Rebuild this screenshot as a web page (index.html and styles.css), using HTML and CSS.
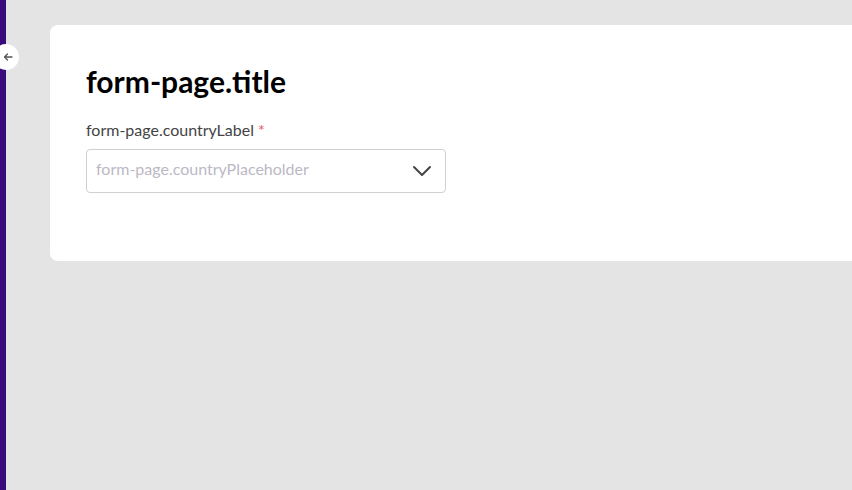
FILE: index.html
```html
<!DOCTYPE html>
<html lang="en">
<head>
    <meta charset="UTF-8">
    <meta name="viewport" content="width=device-width, initial-scale=1.0">
    <title>form-page</title>
    <link rel="stylesheet" href="styles.css">
</head>
<body>
    <div class="layout">
        <aside class="sidebar">
            <button class="collapse-btn" aria-label="Collapse">
                <svg width="10" height="10" viewBox="0 0 10 10">
                    <path d="M9 5H1.5M4.5 2L1.5 5L4.5 8" fill="none" stroke="#555" stroke-width="1.3" stroke-linecap="round" stroke-linejoin="round"/>
                </svg>
            </button>
        </aside>
        <main class="content">
            <section class="card">
                <h1 class="card-title">form-page.title</h1>
                <div class="field">
                    <label class="field-label">form-page.countryLabel <span class="required">*</span></label>
                    <div class="select">
                        <span class="select-placeholder">form-page.countryPlaceholder</span>
                        <svg class="select-arrow" width="20" height="12" viewBox="0 0 20 12">
                            <path d="M2 2L10 10L18 2" fill="none" stroke="#444" stroke-width="2" stroke-linecap="round" stroke-linejoin="round"/>
                        </svg>
                    </div>
                </div>
            </section>
        </main>
    </div>
</body>
</html>
```

FILE: styles.css
```css
* {
    margin: 0;
    padding: 0;
    box-sizing: border-box;
}
body {
    font-family: Lato, "Liberation Sans", sans-serif;
    background-color: #e4e4e4;
    height: 100vh;
    overflow: hidden;
}
.layout {
    display: flex;
    height: 100%;
}
.sidebar {
    position: relative;
    width: 6px;
    flex-shrink: 0;
    background-color: #3b0a7a;
}
.collapse-btn {
    position: absolute;
    left: -7px;
    top: 44px;
    width: 26px;
    height: 26px;
    border-radius: 50%;
    border: none;
    background: #fff;
    display: flex;
    align-items: center;
    justify-content: center;
    padding-left: 3px;
    cursor: pointer;
}
.content {
    flex: 1;
    min-width: 0;
    overflow: hidden;
    padding: 25px 0 0 44px;
}
.card {
    width: 900px;
    background: #fff;
    border-radius: 8px;
    padding: 36px 36px 68px 36px;
}
.card-title {
    font-size: 30px;
    font-weight: 700;
    color: #000;
    line-height: 40px;
    margin-bottom: 19px;
}
.field-label {
    display: block;
    font-size: 16px;
    color: #444;
    line-height: 20px;
    margin-bottom: 9px;
}
.required {
    color: #e5585e;
}
.select {
    width: 360px;
    height: 44px;
    border: 1px solid #cfcfd4;
    border-radius: 4px;
    display: flex;
    align-items: center;
    justify-content: space-between;
    padding: 0 13px 0 9px;
}
.select-placeholder {
    font-size: 16px;
    line-height: 20px;
    margin-bottom: 4px;
    color: #bbb9c5;
}
```
